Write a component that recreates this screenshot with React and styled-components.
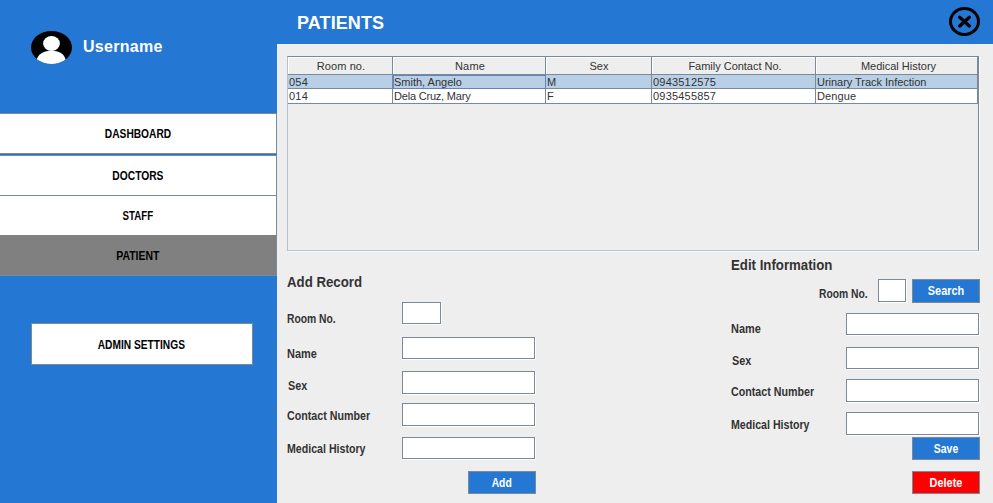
import React from "react";
import styled, { createGlobalStyle, css } from "styled-components";

const blue = "#2477d3";
const steel = "#7a8a99";
const paleSteel = "#b4c2cf";

const GlobalStyle = createGlobalStyle`
  *, *::before, *::after { box-sizing: border-box; }
  body {
    margin: 0;
    background: #eeeeee;
    color: #333333;
    font-family: "Liberation Sans", Arial, sans-serif;
    font-size: 12px;
    line-height: 14px;
    overflow: hidden;
  }
  button, input { font: inherit; margin: 0; padding: 0; border-radius: 0; }
`;

const Window = styled.div`
  display: grid;
  grid-template-columns: 277px 1fr;
  width: 100%;
  height: 503px;
`;

/* Text squeezed horizontally around its anchor point */
const Squeezed = styled.span`
  display: inline-block;
  white-space: nowrap;
  transform: scaleX(${(p) => p.$x});
  transform-origin: ${(p) => p.$origin || "center"};
`;

const Sidebar = styled.aside`
  display: flex;
  flex-direction: column;
  background: ${blue};
`;

const Profile = styled.div`
  display: flex;
  align-items: flex-start;
  height: 113px;
  padding: 31px 0 0 31px;
`;

const Username = styled.div`
  margin: 6px 0 0 11px;
  color: #fff;
  font-size: 16px;
  font-weight: bold;
  line-height: 19px;
  letter-spacing: 0.3px;
`;

const Nav = styled.nav`
  display: flex;
  flex-direction: column;
`;

const SideButton = styled.button`
  border: 1px solid ${steel};
  background: #fff;
  color: #000;
  font-weight: bold;
`;

const NavButton = styled(SideButton)`
  height: 41px;
  border-left: 0;
  ${(p) => p.$joined && css`margin-top: -1px;`}
  ${(p) => p.$spaced && css`margin-top: 1px;`}
  ${(p) => p.$active && css`background: #808080; border-top-color: #808080;`}
`;

const AdminButton = styled(SideButton)`
  width: 222px;
  height: 42px;
  margin: 47px 0 0 31px;
  padding: 2px 1px 0 0;
`;

const Main = styled.main`
  display: flex;
  flex-direction: column;
  min-width: 0;
`;

const Header = styled.header`
  display: flex;
  justify-content: space-between;
  align-items: flex-start;
  height: 44px;
  padding: 7px 13px 0 20px;
  background: ${blue};
`;

const Title = styled.h1`
  margin: 6px 0 0;
  color: #fff;
  font-size: 18px;
  line-height: 20px;
  letter-spacing: 0.1px;
`;

const CloseButton = styled.button`
  display: block;
  border: 0;
  background: none;
  height: 30px;
`;

const TablePane = styled.div`
  width: 692px;
  height: 195px;
  margin: 12px 0 0 10px;
  border: 1px solid;
  border-color: ${steel} ${steel} ${paleSteel} ${paleSteel};
  box-shadow: 1px 1px 0 #f9f9f9;
`;

const TableRow = styled.div`
  display: grid;
  grid-template-columns: 105px 153px 106px 164px 162px;
  grid-template-rows: ${(p) => p.$height}px;
  height: ${(p) => p.$height}px;
  font-size: 11px;
  line-height: 13px;
  background: ${(p) => (p.$selected ? "#b8cfe5" : "#fff")};
`;

const HeadCell = styled.div`
  padding-top: 3px;
  border-right: 1px solid ${steel};
  border-bottom: 1px solid ${steel};
  background: #eee;
  box-shadow: inset 1px 1px 0 #fff;
  text-align: center;
  padding-left: ${(p) => p.$shift || 0}px;
  letter-spacing: ${(p) => p.$spacing || 0}px;
`;

const Cell = styled.div`
  padding: 1px 0 0 1px;
  border-right: 1px solid ${steel};
  border-bottom: 1px solid ${steel};
  letter-spacing: ${(p) => p.$spacing || 0}px;
  white-space: nowrap;
  ${(p) => p.$focused && css`
    border-color: #6382bf;
    box-shadow: inset 1px 1px 0 #6382bf;
  `}
`;

const Forms = styled.div`
  display: flex;
  justify-content: space-between;
  width: 693px;
  margin-left: 10px;
`;

const Form = styled.section`
  display: flex;
  flex-direction: column;
  width: 249px;
`;

const FormTitle = styled.h2`
  height: 16px;
  margin: ${(p) => p.$top}px 0 0;
  font-size: 14px;
  line-height: 16px;
`;

const FieldRow = styled.label`
  display: grid;
  grid-template-columns: 115px 1fr;
  align-items: start;
  height: ${(p) => p.$height}px;
  margin-top: ${(p) => p.$gap}px;
`;

const FieldName = styled.span`
  padding: ${(p) => p.$drop}px 0 0 ${(p) => p.$indent || 0}px;
  font-weight: bold;
`;

const Input = styled.input`
  display: block;
  width: ${(p) => p.$width || 133}px;
  height: ${(p) => p.$height}px;
  border: 1px solid ${steel};
  background: #fff;
  box-shadow: 1px 1px 0 #fff;
  outline: none;
`;

const SearchRow = styled.div`
  display: flex;
  align-items: flex-start;
  height: 24px;
  margin-top: 6px;
  padding-left: 88px;
`;

const SearchName = styled.label`
  width: 59px;
  padding-top: 8px;
  font-weight: bold;
  white-space: nowrap;
`;

const ActionButton = styled.button`
  width: 68px;
  height: ${(p) => p.$height || 23}px;
  margin: ${(p) => p.$gap || 0}px 0 0 auto;
  border: 1px solid ${steel};
  background: ${(p) => (p.$danger ? "#ff0000" : blue)};
  color: #fff;
  font-weight: bold;
`;

const Avatar = () => (
  <svg width="41" height="33" viewBox="0 0 41 33">
    <defs>
      <clipPath id="face"><ellipse cx="20.5" cy="16.5" rx="20.5" ry="16.5" /></clipPath>
    </defs>
    <g clipPath="url(#face)">
      <rect width="41" height="33" fill="#000" />
      <ellipse cx="20.5" cy="12.5" rx="8.4" ry="7.4" fill="#fff" />
      <path d="M5.5 33V29C7.5 22.5 13 19.7 20.5 19.7S33 22.5 34.8 29V33Z" fill="#fff" />
    </g>
  </svg>
);

const CloseIcon = () => (
  <svg width="31" height="29" viewBox="0 0 31 29" fill="none" stroke="#000">
    <ellipse cx="15.5" cy="14.5" rx="14" ry="13" strokeWidth="3" />
    <path d="M10.7 10.2L20.3 18.9M20.3 10.2L10.7 18.9" strokeWidth="3.4" strokeLinecap="round" />
  </svg>
);

const navItems = [
  { text: "DASHBOARD", x: 0.85 },
  { text: "DOCTORS", x: 0.855, spaced: true },
  { text: "STAFF", x: 0.81, joined: true },
  { text: "PATIENT", x: 0.87, joined: true, active: true },
];

const columns = [
  { text: "Room no.", shift: 2, spacing: 0.1 },
  { text: "Name", shift: 2, spacing: 0.2 },
  { text: "Sex", shift: 1 },
  { text: "Family Contact No.", shift: 3, spacing: -0.02 },
  { text: "Medical History", shift: 4 },
];

const addFields = [
  { text: "Room No.", x: 0.86, gap: 12, height: 22, drop: 10, width: 39 },
  { text: "Name", x: 0.91, gap: 13, height: 22, drop: 10 },
  { text: "Sex", x: 0.9, gap: 12, height: 23, drop: 8, indent: 1 },
  { text: "Contact Number", x: 0.89, gap: 9, height: 23, drop: 6 },
  { text: "Medical History", x: 0.885, gap: 11, height: 22, drop: 5 },
];

const editFields = [
  { text: "Name", x: 0.91, gap: 10, height: 22, drop: 9 },
  { text: "Sex", x: 0.9, gap: 12, height: 22, drop: 7, indent: 1 },
  { text: "Contact Number", x: 0.89, gap: 10, height: 23, drop: 6 },
  { text: "Medical History", x: 0.885, gap: 10, height: 23, drop: 6 },
];

const Field = ({ text, x, gap, height, drop, width, indent }) => (
  <FieldRow $gap={gap} $height={height}>
    <FieldName $drop={drop} $indent={indent}>
      <Squeezed $x={x} $origin="left">{text}</Squeezed>
    </FieldName>
    <Input $width={width} $height={height} />
  </FieldRow>
);

export default function App() {
  return (
    <>
      <GlobalStyle />
      <Window>
        <Sidebar>
          <Profile>
            <Avatar />
            <Username>Username</Username>
          </Profile>
          <Nav>
            {navItems.map((n) => (
              <NavButton key={n.text} $joined={n.joined} $spaced={n.spaced} $active={n.active}>
                <Squeezed $x={n.x}>{n.text}</Squeezed>
              </NavButton>
            ))}
          </Nav>
          <AdminButton><Squeezed $x={0.85}>ADMIN SETTINGS</Squeezed></AdminButton>
        </Sidebar>
        <Main>
          <Header>
            <Title><Squeezed $x={1} $origin="left">PATIENTS</Squeezed></Title>
            <CloseButton aria-label="Close"><CloseIcon /></CloseButton>
          </Header>
          <TablePane>
            <TableRow $height={18}>
              {columns.map((c) => (
                <HeadCell key={c.text} $shift={c.shift} $spacing={c.spacing}>{c.text}</HeadCell>
              ))}
            </TableRow>
            <TableRow $height={14} $selected>
              <Cell $spacing={0.2}>054</Cell>
              <Cell $focused>Smith, Angelo</Cell>
              <Cell>M</Cell>
              <Cell $spacing={0.2}>0943512575</Cell>
              <Cell $spacing={-0.03}>Urinary Track Infection</Cell>
            </TableRow>
            <TableRow $height={15}>
              <Cell $spacing={0.2}>014</Cell>
              <Cell $spacing={-0.2}>Dela Cruz, Mary</Cell>
              <Cell>F</Cell>
              <Cell $spacing={0.2}>0935455857</Cell>
              <Cell $spacing={0.1}>Dengue</Cell>
            </TableRow>
          </TablePane>
          <Forms>
            <Form>
              <FormTitle $top={23}><Squeezed $x={0.945} $origin="left">Add Record</Squeezed></FormTitle>
              {addFields.map((f) => <Field key={f.text} {...f} />)}
              <ActionButton $gap={12}><Squeezed $x={0.86}>Add</Squeezed></ActionButton>
            </Form>
            <Form>
              <FormTitle $top={6}><Squeezed $x={0.945} $origin="left">Edit Information</Squeezed></FormTitle>
              <SearchRow>
                <SearchName htmlFor="room"><Squeezed $x={0.86} $origin="left">Room No.</Squeezed></SearchName>
                <Input id="room" $width={28} $height={23} />
                <ActionButton $height={24}><Squeezed $x={0.91}>Search</Squeezed></ActionButton>
              </SearchRow>
              {editFields.map((f) => <Field key={f.text} {...f} />)}
              <ActionButton $gap={2}><Squeezed $x={0.87}>Save</Squeezed></ActionButton>
              <ActionButton $gap={11} $danger><Squeezed $x={0.91}>Delete</Squeezed></ActionButton>
            </Form>
          </Forms>
        </Main>
      </Window>
    </>
  );
}
